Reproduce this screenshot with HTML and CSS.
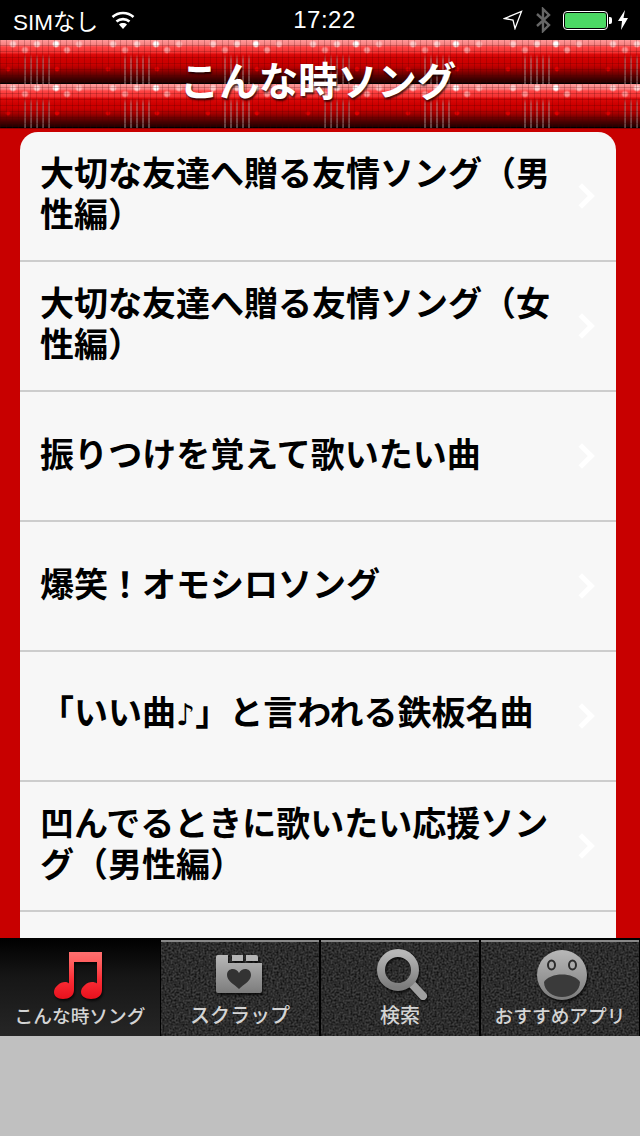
FILE: index.html
```html
<!DOCTYPE html>
<html lang="ja">
<head>
    <meta charset="UTF-8">
    <meta name="viewport" content="width=device-width, initial-scale=1.0">
    <title>こんな時ソング</title>
    <link rel="stylesheet" href="styles.css">
</head>
<body>
    <div class="status-bar">
        <div class="status-left">
            <span>SIMなし</span>
            <svg class="wifi" width="26" height="20" viewBox="0 0 26 20">
                <path d="M13 19L9 14.5C11.3 12.6 14.7 12.6 17 14.5Z" fill="#fff"/>
                <path d="M6.5 11.5C10.2 8.3 15.8 8.3 19.5 11.5" fill="none" stroke="#fff" stroke-width="2.6"/>
                <path d="M2.5 7C8.5 1.6 17.5 1.6 23.5 7" fill="none" stroke="#fff" stroke-width="2.6"/>
            </svg>
        </div>
        <div class="status-time">17:22</div>
        <div class="status-right">
            <svg width="20" height="20" viewBox="0 0 20 20">
                <path d="M1.5 8.5L18.5 1.5L12 18.5L10 10Z" fill="none" stroke="#fff" stroke-width="1.3"/>
            </svg>
            <svg class="bt" width="16" height="26" viewBox="0 0 16 26">
                <path d="M2 7L14 18L8 24V2L14 8L2 19" fill="none" stroke="#666" stroke-width="2.4"/>
            </svg>
            <div class="battery"><div class="battery-fill"></div></div>
            <div class="battery-tip"></div>
            <svg width="10" height="20" viewBox="0 0 10 20">
                <path d="M7 0L0 11H4L3 20L10 8H5.5Z" fill="#fff"/>
            </svg>
        </div>
    </div>

    <header class="title-bar">
        <h1>こんな時ソング</h1>
    </header>

    <main class="content">
        <ul class="song-list">
            <li class="song-row"><span class="song-name">大切な友達へ贈る友情ソング（男性編）</span><span class="chevron"></span></li>
            <li class="song-row"><span class="song-name">大切な友達へ贈る友情ソング（女性編）</span><span class="chevron"></span></li>
            <li class="song-row"><span class="song-name">振りつけを覚えて歌いたい曲</span><span class="chevron"></span></li>
            <li class="song-row"><span class="song-name">爆笑！オモシロソング</span><span class="chevron"></span></li>
            <li class="song-row"><span class="song-name">「いい曲<span class="note">♪</span>」と言われる鉄板名曲</span><span class="chevron"></span></li>
            <li class="song-row"><span class="song-name">凹んでるときに歌いたい応援ソング（男性編）</span><span class="chevron"></span></li>
            <li class="song-row"></li>
        </ul>
    </main>

    <svg class="defs" width="0" height="0">
        <defs>
            <linearGradient id="redGrad" x1="0" y1="0" x2="0" y2="1">
                <stop offset="0" stop-color="#ff7070"/>
                <stop offset="0.2" stop-color="#ff6060"/>
                <stop offset="0.6" stop-color="#fb2c35"/>
                <stop offset="1" stop-color="#e8101c"/>
            </linearGradient>
            <linearGradient id="grayGrad" x1="0" y1="0" x2="0" y2="1">
                <stop offset="0" stop-color="#b8b8b8"/>
                <stop offset="1" stop-color="#7c7c7c"/>
            </linearGradient>
            <filter id="grain">
                <feTurbulence type="fractalNoise" baseFrequency="0.5" numOctaves="2" seed="4"/>
                <feColorMatrix values="0 0 0 0 0  0 0 0 0 0  0 0 0 0 0  1.5 0 0 0 -0.45"/>
            </filter>
        </defs>
    </svg>

    <nav class="tab-bar">
        <div class="tab tab-active">
            <svg class="tab-icon" width="60" height="56" viewBox="0 0 60 56">
                <path fill="url(#redGrad)" d="M19 4H52V42C52 48 47 51 41 51C35 51 31 48 31 44C31 39 37 34 42 34C44 34 46 34.500 47 35.500V14H24V42C24 48 19 51 13 51C7 51 4 48 4 44C4 39 10 34 15 34C17 34 18 34.500 19 35.500Z"/>
            </svg>
            <span class="tab-label tab-label-tight">こんな時ソング</span>
        </div>
        <div class="tab">
            <svg class="tab-grain"><rect width="100%" height="100%" filter="url(#grain)"/></svg>
            <svg class="tab-icon" width="60" height="56" viewBox="0 0 60 56">
                <path fill="url(#grayGrad)" d="M8 7H18V15H52V43Q52 45 50 45H8Q6 45 6 43V9Q6 7 8 7Z"/>
                <path fill="#b4b4b4" d="M22 7H33V13H22ZM36 7H46Q48 7 48 9V13H36Z"/>
                <path fill="#333" d="M29 41C24 36 17 33 17 27C17 20 26 19 29 25C32 19 41 20 41 27C41 33 34 36 29 41Z"/>
            </svg>
            <span class="tab-label">スクラップ</span>
        </div>
        <div class="tab">
            <svg class="tab-grain"><rect width="100%" height="100%" filter="url(#grain)"/></svg>
            <svg class="tab-icon" width="60" height="56" viewBox="0 0 60 56">
                <path d="M41 35L53 48" stroke="#a0a0a0" stroke-width="8" stroke-linecap="round"/>
                <circle cx="28" cy="22" r="17" fill="none" stroke="url(#grayGrad)" stroke-width="8"/>
            </svg>
            <span class="tab-label">検索</span>
        </div>
        <div class="tab">
            <svg class="tab-grain"><rect width="100%" height="100%" filter="url(#grain)"/></svg>
            <svg class="tab-icon" width="60" height="56" viewBox="0 0 60 56">
                <circle cx="32" cy="27" r="25" fill="url(#grayGrad)"/>
                <ellipse cx="21.500" cy="17" rx="3.500" ry="4.500" fill="#aaa" stroke="#2c2c2c" stroke-width="2"/>
                <ellipse cx="42.500" cy="17" rx="3.500" ry="4.500" fill="#aaa" stroke="#2c2c2c" stroke-width="2"/>
                <path d="M14 34C20 24 44 24 50 34C50 43 41 49 32 49C23 49 14 43 14 34Z" fill="#3a3a3a"/>
            </svg>
            <span class="tab-label tab-label-tight">おすすめアプリ</span>
        </div>
    </nav>

    <div class="bottom-fill"></div>
</body>
</html>
```

FILE: styles.css
```css
* {
    box-sizing: border-box;
}
body {
    margin: 0;
    height: 1136px;
    display: flex;
    flex-direction: column;
    overflow: hidden;
    background-color: #c0c0c0;
    font-family: "Liberation Sans", "Noto Sans CJK JP", sans-serif;
}
.defs {
    position: absolute;
}

/* status bar */
.status-bar {
    height: 40px;
    flex: none;
    display: grid;
    grid-template-columns: 1fr auto 1fr;
    align-items: center;
    padding: 0 12px 0 13px;
    background-color: #000;
    color: #fff;
}
.status-left {
    display: flex;
    align-items: center;
    gap: 12px;
    font-size: 22.5px;
}
.status-time {
    font-size: 24px;
    letter-spacing: 0.5px;
    margin-left: 8px;
}
.status-right {
    display: flex;
    align-items: center;
    justify-content: flex-end;
}
.status-right .bt {
    margin: 0 12px 0 12px;
}
.battery {
    width: 45px;
    height: 19px;
    border: 1px solid #fff;
    border-radius: 4px;
    padding: 1px;
}
.battery-fill {
    height: 100%;
    background-color: #4cd964;
    border-radius: 2px;
}
.battery-tip {
    width: 3px;
    height: 7px;
    margin: 0 6px 0 1px;
    background-color: #fff;
    border-radius: 0 2px 2px 0;
}

/* title bar, one 100x44 tile of the led pattern */
.title-bar {
    height: 88px;
    flex: none;
    display: flex;
    align-items: center;
    justify-content: center;
    padding: 0 4px 10px 0;
    background-image:
        repeating-linear-gradient(90deg, rgba(70,0,0,0.22) 0 1px, transparent 1px 6px),
        repeating-linear-gradient(0deg, rgba(70,0,0,0.22) 0 1px, transparent 1px 6px),
        radial-gradient(circle 4px at 56px 4px, #fff 50%, transparent),
        radial-gradient(circle 4px at 13px 4px, #ffc8c8 50%, transparent),
        radial-gradient(circle 4px at 37px 4px, #ffd0d0 50%, transparent),
        radial-gradient(circle 4px at 79px 4px, #ffb8b8 50%, transparent),
        radial-gradient(circle 4px at 25px 10px, #ff8a8a 50%, transparent),
        radial-gradient(circle 4px at 67px 10px, #ff9494 50%, transparent),
        radial-gradient(circle 3px at 57px 29px, #e00000 50%, transparent),
        radial-gradient(circle 3px at 8px 29px, #d80000 50%, transparent),
        linear-gradient(180deg, #f99 0, #f78080 5px, #f44 7px, #f03030 13px, #dc0a0a 14px, transparent 20px),
        linear-gradient(90deg, transparent 24px, rgba(170,150,150,0.45) 24px 26px, transparent 26px 30px, rgba(170,150,150,0.45) 30px 32px, transparent 32px 36px, rgba(170,150,150,0.45) 36px 38px, transparent 38px 42px, rgba(170,150,150,0.45) 42px 44px, transparent 44px 48px, rgba(170,150,150,0.45) 48px 50px, transparent 50px),
        linear-gradient(180deg, #d80000 0, #cc0000 24px, #a80000 29px, #7a0000 33px, #480000 38px, #200000 43px, #000 43px);
    background-size: 6px 6px, 6px 6px, 100px 44px, 100px 44px, 100px 44px, 100px 44px, 100px 44px, 100px 44px, 100px 44px, 100px 44px, 100px 44px, 100px 44px, 100px 44px;
}
.title-bar h1 {
    margin: 0;
    font-family: "Noto Sans CJK JP", sans-serif;
    font-size: 39.5px;
    font-weight: 700;
    line-height: 1;
    color: #fff;
    text-shadow: 1px 2px 2px rgba(0,0,0,0.7);
}

/* list */
.content {
    height: 810px;
    flex: none;
    overflow: hidden;
    padding: 4px 24px 0 20px;
    background-color: #c80000;
    border-top: 1px solid #900000;
}
.song-list {
    list-style: none;
    margin: -1px 0 0;
    padding: 0;
    background-color: #f7f7f7;
    border-radius: 18px 18px 0 0;
    overflow: hidden;
}
.song-row {
    height: 130px;
    display: flex;
    align-items: center;
    padding: 0 20px;
    border-bottom: 2px solid #cdcdcd;
}
.song-row:last-child {
    border-bottom: none;
}
.song-name {
    width: 516px;
    margin-bottom: 8px;
    font-family: "Noto Sans CJK JP", sans-serif;
    font-size: 34px;
    font-weight: 700;
    line-height: 41px;
    color: #000;
}
.note {
    font-family: "DejaVu Sans", sans-serif;
    font-size: 30px;
}
.chevron {
    width: 18px;
    height: 18px;
    margin-left: 17px;
    border-top: 5px solid #fff;
    border-right: 5px solid #fff;
    transform: rotate(45deg);
}

/* tab bar */
.tab-bar {
    height: 98px;
    flex: none;
    display: flex;
    padding-top: 2px;
    background-color: #000;
}
.tab {
    width: 158px;
    margin: 0 1px;
    flex: none;
    position: relative;
    overflow: hidden;
    display: flex;
    flex-direction: column;
    align-items: center;
    border-top: 2px solid #888;
    background-color: #404040;
}
.tab-grain {
    position: absolute;
    top: 0;
    left: 0;
    width: 100%;
    height: 100%;
}
.tab-active {
    width: 160px;
    margin: -2px 0 0;
    padding-top: 4px;
    border-top: none;
    background: linear-gradient(180deg, #000 0, #161616 40%, #262626 100%);
}
.tab-icon {
    position: relative;
    margin-top: 6px;
    filter: drop-shadow(1px 2px 1px rgba(0,0,0,0.7));
}
.tab-label {
    position: relative;
    margin-top: -2px;
    font-family: "Noto Sans CJK JP", sans-serif;
    font-size: 20px;
    font-weight: 500;
    line-height: 26px;
    color: #d4d4d4;
    white-space: nowrap;
}
.tab-label-tight {
    font-size: 18.7px;
}
.bottom-fill {
    flex: 1;
    background-color: #c0c0c0;
}
```
